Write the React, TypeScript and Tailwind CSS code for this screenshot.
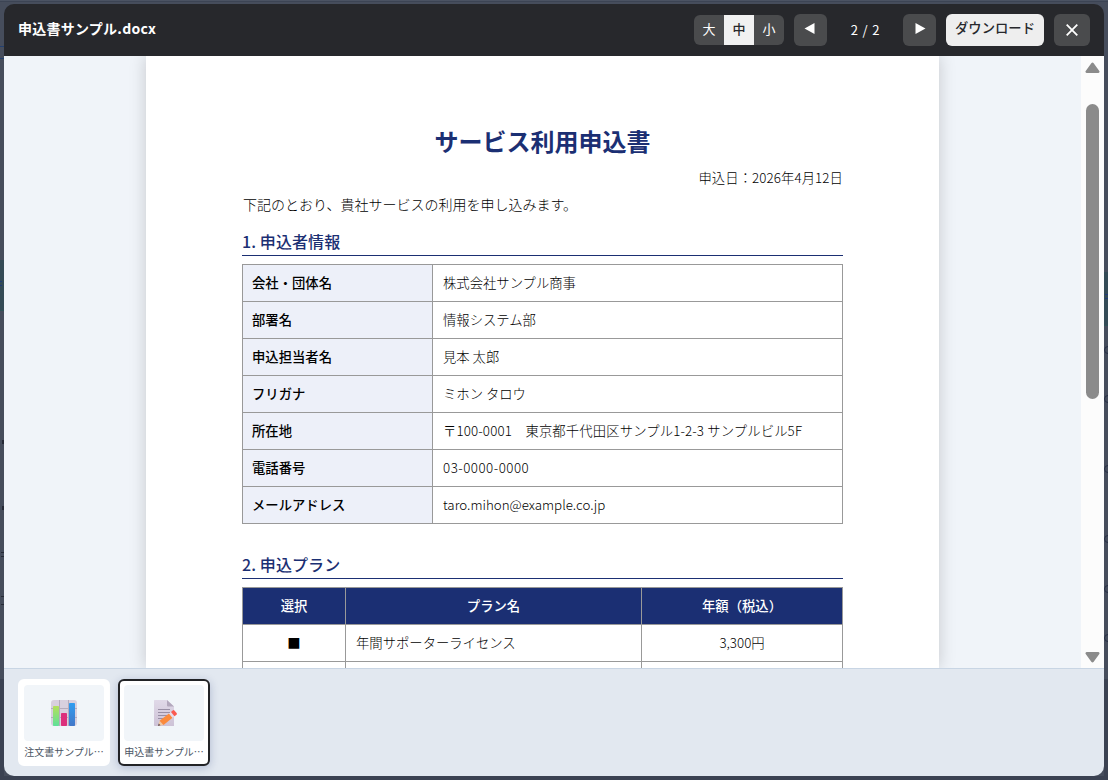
import { clsx } from 'clsx'

const applicant = [
  { label: '会社・団体名', value: '株式会社サンプル商事' },
  { label: '部署名', value: '情報システム部' },
  { label: '申込担当者名', value: '見本 太郎' },
  { label: 'フリガナ', value: 'ミホン タロウ' },
  { label: '所在地', value: '〒100-0001　東京都千代田区サンプル1-2-3 サンプルビル5F', tracking: 'tracking-[0.14px]' },
  { label: '電話番号', value: '03-0000-0000', tracking: 'tracking-[0.5px]' },
  { label: 'メールアドレス', value: 'taro.mihon@example.co.jp' },
]

function ChartIcon() {
  return (
    <svg width="26" height="26" viewBox="0 0 26 26">
      <defs>
        <linearGradient id="green" x1="0" y1="0" x2="0" y2="1">
          <stop offset="0" stopColor="#b4e05a" />
          <stop offset="1" stopColor="#5fe09a" />
        </linearGradient>
        <linearGradient id="blue" x1="0" y1="0" x2="0" y2="1">
          <stop offset="0" stopColor="#2f9df0" />
          <stop offset="1" stopColor="#4377c8" />
        </linearGradient>
      </defs>
      <rect width="26" height="26" rx="3" fill="#d8d0de" />
      <path d="M0 8.5h26M0 17.5h26M8.5 0v26M17.5 0v26" stroke="#b5acbc" strokeWidth="1" />
      <rect x="2" y="6" width="6" height="20" rx="0.8" fill="url(#green)" />
      <rect x="10" y="13" width="6" height="13" rx="0.8" fill="#dc2f7c" />
      <rect x="18" y="3" width="6" height="23" rx="0.8" fill="url(#blue)" />
    </svg>
  )
}

function MemoIcon() {
  return (
    <svg className="ml-[3px]" width="26" height="26" viewBox="0 0 26 26">
      <defs>
        <linearGradient id="paper" x1="0" y1="0" x2="0" y2="1">
          <stop offset="0" stopColor="#e0d9e8" />
          <stop offset="1" stopColor="#cdc2d6" />
        </linearGradient>
      </defs>
      <path d="M1.500 0H14l7 6.500V26h-19.500A1 1 0 0 1 1 25V1a1 1 0 0 1 .5-1z" fill="url(#paper)" />
      <path d="M14 0v5.500a1 1 0 0 0 1 1h6z" fill="#b3a8bd" />
      <path d="M5 9.500h12M5 12.500h12M5 15.500h9M5 18.500h5" stroke="#998fa5" strokeWidth="1" />
      <path d="M5 26l1.500-5 4 4z" fill="#f3c9a0" />
      <path d="M5 26l.7-2.400 1.800 1.700z" fill="#5b4a55" />
      <path d="M6.500 20.800l9.500-7.300 3.500 4.300-9 7.200z" fill="#fb8a3c" />
      <path d="M16 13.500l2-1.500 3.500 4.300-2 1.500z" fill="#e6dcea" />
      <path d="M18 12l1.700-1.500a1.300 1.300 0 0 1 1.900.2l2 2.300a1.300 1.300 0 0 1-.1 1.800l-2 1.500z" fill="#fb5a50" />
    </svg>
  )
}

const files = [
  { name: '注文書サンプル…', icon: <ChartIcon />, active: false },
  { name: '申込書サンプル…', icon: <MemoIcon />, active: true },
]

// Dimmed page behind the viewer, only its edges are visible
function Backdrop() {
  return (
    <div className="absolute inset-0 overflow-hidden bg-[#464d5c]">
      <div className="absolute inset-x-0 top-0 h-[2px] border-b border-[#3c4454] bg-[#4b5363]" />
      <div className="absolute left-0 top-[260px] h-[51px] w-1 border-b border-[#2f5357] bg-[#344b56]" />
      <div className="absolute left-0 top-[281px] h-[5px] w-[2px] border-y border-[#1f3a78]" />
      <div className="absolute right-0 top-[272px] h-[54px] w-1 border-b border-[#2f5357] bg-[#344b56]" />
      <div className="absolute right-0 top-[294px] h-[5px] w-[3px] border-y border-[#1f3a78]" />
      <div className="absolute bottom-0 right-0 h-[101px] w-1 bg-[#3b4252]" />
      <div className="absolute bottom-0 left-0 h-[101px] w-1 bg-[#3b4252]" />
      <div className="absolute inset-x-0 bottom-0 h-1 bg-[#3b4252]" />
      <div className="absolute -right-1 top-[346px] size-2 rounded-full border border-[#272f45]" />
      <div className="absolute -right-1 top-[395px] size-2 rounded-full border border-[#272f45]" />
      <div className="absolute -right-1 top-[465px] size-2 rounded-full border border-[#272f45]" />
      <div className="absolute -right-1 top-[535px] size-2 rounded-full border border-[#272f45]" />
      <div className="absolute -right-1 top-[585px] size-2 rounded-full border border-[#272f45]" />
      <div className="absolute -right-1 top-[634px] size-2 rounded-full border border-[#272f45]" />
      <div className="absolute left-0 top-[46px] h-[13px] w-1 border-y border-[#23406f]" />
      <div className="absolute left-[2px] top-[440px] h-1 w-[2px] bg-[#262a36]" />
      <div className="absolute left-[2px] top-[506px] h-1 w-[2px] bg-[#262a36]" />
      <div className="absolute left-[1px] top-[552px] h-[5px] w-[3px] border-y border-[#262a36]" />
      <div className="absolute left-[1px] top-[596px] h-[9px] w-[3px] border-y border-[#262a36]" />
    </div>
  )
}

function Header() {
  return (
    <header className="flex h-[52px] shrink-0 items-center gap-2.5 bg-[#27282c] pl-3.5 pr-3.5 text-white">
      <h1 className="flex-1 pb-1 text-sm font-bold tracking-[0.25px]">申込書サンプル.docx</h1>
      <div className="flex h-[30px] overflow-hidden rounded-md bg-[#4a4b4d] text-[13px]">
        {['大', '中', '小'].map((size) => (
          <button
            key={size}
            className={clsx('w-[30px] pb-0.5 leading-[28px]', size === '中' && 'bg-[#f1f1f1] font-medium text-[#27282c]')}
          >
            {size}
          </button>
        ))}
      </div>
      <button className="flex h-8 w-[33px] justify-center rounded-md bg-[#4a4b4d] pt-[9px] pr-[2px]">
        <svg width="11" height="11" viewBox="0 0 11 11" fill="currentColor">
          <path d="M10.500 0v11L0.500 5.500z" />
        </svg>
      </button>
      <span className="w-14 pb-px pl-px text-center text-[13px] tracking-[0.8px]">2 / 2</span>
      <button className="flex h-8 w-[33px] justify-center rounded-md bg-[#4a4b4d] pt-[9px] pl-[2px]">
        <svg width="11" height="11" viewBox="0 0 11 11" fill="currentColor">
          <path d="M0.500 0v11l10-5.500z" />
        </svg>
      </button>
      <button className="h-8 w-[98px] rounded-md bg-[#eeeeee] pb-[5px] text-[13.330px] font-medium text-[#27282c]">
        ダウンロード
      </button>
      <button className="flex h-8 w-9 items-center justify-center rounded-md bg-[#4a4b4d]">
        <svg width="12" height="12" viewBox="0 0 12 12" stroke="currentColor" strokeWidth="1.800">
          <path d="M0.700 0.700l10.600 10.600M11.300 0.700L0.700 11.300" />
        </svg>
      </button>
    </header>
  )
}

function SectionTitle({ children, className }: { children: string; className?: string }) {
  return (
    <h3
      className={clsx(
        'border-b border-[#1b2f73] pb-[2px] text-base leading-6 font-medium tracking-[0.1px] text-[#1b2f73]',
        className
      )}
    >
      {children}
    </h3>
  )
}

function Document() {
  return (
    <article className="w-[793px] shrink-0 bg-white px-24 pt-[67px] text-[13.330px] text-black shadow-[0_0_16px_rgba(0,0,0,0.18)]">
      <h2 className="text-center text-2xl leading-9 font-bold text-[#1b2f73]">サービス利用申込書</h2>
      <p className="mt-2 text-right leading-[22px] font-light tracking-[0.1px]">申込日：2026年4月12日</p>
      <p className="mt-[3px] pl-px text-sm leading-6 font-light">下記のとおり、貴社サービスの利用を申し込みます。</p>

      <SectionTitle className="mt-[13px]">1. 申込者情報</SectionTitle>
      <table className="mt-2 w-full table-fixed border-collapse">
        <colgroup>
          <col className="w-[190px]" />
          <col />
        </colgroup>
        <tbody>
          {applicant.map((row) => (
            <tr key={row.label} className="h-[37px]">
              <th className="border border-[#999999] bg-[#edf0f9] px-[9px] text-left font-medium">{row.label}</th>
              <td className={clsx('border border-[#999999] px-[10px] font-light', row.tracking)}>{row.value}</td>
            </tr>
          ))}
        </tbody>
      </table>

      <SectionTitle className="mt-7">2. 申込プラン</SectionTitle>
      <table className="mt-2 w-full table-fixed border-collapse">
        <colgroup>
          <col className="w-[103px]" />
          <col className="w-[296px]" />
          <col />
        </colgroup>
        <thead>
          <tr className="h-[37px] bg-[#1b2f73] text-white">
            <th className="border border-[#999999] font-medium">選択</th>
            <th className="border border-[#999999] font-medium">プラン名</th>
            <th className="border border-[#999999] font-medium">年額（税込）</th>
          </tr>
        </thead>
        <tbody>
          <tr className="h-[37px]">
            <td className="border border-[#999999] text-center">■</td>
            <td className="border border-[#999999] px-[10px] font-light">年間サポーターライセンス</td>
            <td className="border border-[#999999] text-center font-light">3,300円</td>
          </tr>
          <tr className="h-[37px]">
            <td className="border border-[#999999]" />
            <td className="border border-[#999999]" />
            <td className="border border-[#999999]" />
          </tr>
        </tbody>
      </table>
    </article>
  )
}

function Scrollbar() {
  return (
    <div className="flex w-[23px] shrink-0 flex-col items-center bg-[#fcfcfc] pt-1.5 pb-[5px]">
      <svg width="15" height="12" viewBox="0 0 15 12" fill="#8b8b8b">
        <path d="M6.300 1.200a1.500 1.500 0 0 1 2.400 0l5.600 7.800a1.200 1.200 0 0 1-1 1.900H1.700a1.200 1.200 0 0 1-1-1.900z" />
      </svg>
      <div className="mt-[30px] h-[295px] w-[13px] rounded-full bg-[#8b8b8b]" />
      <svg className="mt-auto" width="15" height="12" viewBox="0 0 15 12" fill="#8b8b8b">
        <path d="M6.300 10.800a1.500 1.500 0 0 0 2.400 0l5.600-7.800a1.200 1.200 0 0 0-1-1.900H1.700a1.200 1.200 0 0 0-1 1.900z" />
      </svg>
    </div>
  )
}

export default function App() {
  return (
    <div
      lang="ja"
      className="relative h-[780px] w-[1108px] overflow-hidden p-1 font-['Noto_Sans_CJK_JP',sans-serif]"
    >
      <Backdrop />
      <div className="relative flex h-full flex-col overflow-hidden rounded-[10px]">
        <Header />
        <main className="flex h-[612px] shrink-0 overflow-hidden bg-[#f0f4f9]">
          <div className="flex flex-1 justify-center overflow-hidden">
            <Document />
          </div>
          <Scrollbar />
        </main>
        <footer className="flex flex-1 items-start gap-2 border-t border-[#c8d5e4] bg-[#e2e8f0] px-3.5 pt-2.5">
          {files.map((file) => (
            <button
              key={file.name}
              className={clsx(
                'flex h-[87px] w-[92px] flex-col items-center rounded-md border-2 bg-white p-1',
                file.active ? 'border-[#222326] shadow-[0_2px_8px_rgba(27,47,115,0.25)]' : 'border-white'
              )}
            >
              <span className="flex h-14 w-20 items-center justify-center rounded bg-[#f1f5f9]">{file.icon}</span>
              <span className="mt-[3px] text-[10px] leading-4 whitespace-nowrap text-[#4b5563]">{file.name}</span>
            </button>
          ))}
        </footer>
      </div>
    </div>
  )
}
